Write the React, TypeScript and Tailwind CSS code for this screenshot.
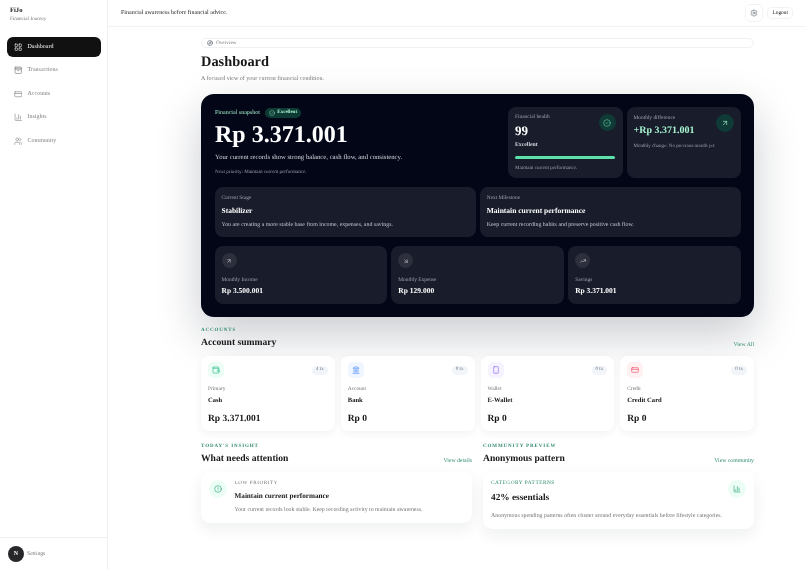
import React from "react";
import { LayoutGrid, CreditCard, ChartColumn, Users, Settings, Compass, CircleCheck, ArrowUpRight, ArrowDownRight, TrendingUp, Wallet, Landmark, Smartphone, CircleAlert } from "lucide-react";

function TxIcon({ className }: { className?: string }) {
  return (
    <svg viewBox="0 0 24 24" fill="none" stroke="currentColor" strokeWidth={1.8} strokeLinecap="round" strokeLinejoin="round" className={className}>
      <rect x="3" y="3" width="18" height="18" rx="2" />
      <path d="M3 9h18" />
      <path d="M3 6h18" />
      <path d="M10 13h4" />
    </svg>
  );
}

const nav = [
  { label: "Dashboard", Icon: LayoutGrid, active: true },
  { label: "Transactions", Icon: TxIcon },
  { label: "Accounts", Icon: CreditCard },
  { label: "Insights", Icon: ChartColumn },
  { label: "Community", Icon: Users },
];

const stats = [
  { label: "Monthly Income", value: "Rp 3.500.001", Icon: ArrowUpRight },
  { label: "Monthly Expense", value: "Rp 129.000", Icon: ArrowDownRight },
  { label: "Savings", value: "Rp 3.371.001", Icon: TrendingUp },
];

const accounts = [
  { kicker: "Primary", name: "Cash", value: "Rp 3.371.001", tx: "4 tx", Icon: Wallet, box: "bg-[#ecfdf5]", color: "text-[#10b981]" },
  { kicker: "Account", name: "Bank", value: "Rp 0", tx: "0 tx", Icon: Landmark, box: "bg-[#eff6ff]", color: "text-[#3b82f6]" },
  { kicker: "Wallet", name: "E-Wallet", value: "Rp 0", tx: "0 tx", Icon: Smartphone, box: "bg-[#f5f3ff]", color: "text-[#8b5cf6]" },
  { kicker: "Credit", name: "Credit Card", value: "Rp 0", tx: "0 tx", Icon: CreditCard, box: "bg-[#fff1f2]", color: "text-[#f43f5e]" },
];

function SectionHead({ kicker, title, link }: { kicker: string; title: string; link: string }) {
  return (
    <div className="flex items-end justify-between">
      <div>
        <div className="text-[5px] leading-[7px] font-bold tracking-[0.18em] text-[#2f8a72]">{kicker}</div>
        <div className="mt-[2px] text-[9.6px] leading-[14px] font-bold text-[#171717]">{title}</div>
      </div>
      <div className="pb-[1px] text-[5.75px] leading-[8px] text-[#2f8a72]">{link}</div>
    </div>
  );
}

export default function App() {
  return (
    <div className="flex h-[570px] w-[806px] overflow-hidden bg-white text-[#171717] [font-family:'Liberation_Serif',serif] [text-rendering:geometricPrecision]">
      <aside className="flex w-[108px] shrink-0 flex-col border-r border-[#eef0f3] [will-change:transform]">
        <div className="px-[10px] pt-[6.5px]">
          <div className="text-[6.6px] leading-[8px] font-bold">FiJo</div>
          <div className="text-[5.1px] leading-[8px] text-[#737373]">Financial Journey</div>
        </div>
        <nav className="mt-[14.5px] flex flex-col gap-[3.5px] px-[6.5px]">
          {nav.map(({ label, Icon, active }) => (
            <div key={label} className={`flex h-[20px] items-center gap-[5.5px] rounded-[6px] px-[7px] text-[6px] ${active ? "bg-[#111111] text-white" : "text-[#7a7a7a]"}`}>
              <Icon className="size-[8.5px]" strokeWidth={1.6} />
              <span>{label}</span>
            </div>
          ))}
        </nav>
        <div className="mt-auto flex h-[33px] items-center gap-[2px] border-t border-[#eef0f3] px-[8px]">
          <div className="flex size-[16px] items-center justify-center rounded-full bg-[#27272a] text-[6px] font-bold text-white">N</div>
          <span className="ml-[1px] text-[5.7px] text-[#7a7a7a]">Settings</span>
        </div>
      </aside>

      <main className="flex min-w-0 flex-1 flex-col [will-change:transform]">
        <header className="flex h-[27px] shrink-0 items-center justify-between border-b border-[#f1f2f4] pl-[13px] pr-[13px]">
          <span className="text-[6px]">Financial awareness before financial advice.</span>
          <div className="flex items-center gap-[4px]">
            <div className="flex size-[18px] items-center justify-center rounded-[5px] border border-[#f1f2f4]">
              <Settings className="size-[8px] text-[#4b5563]" strokeWidth={1.5} />
            </div>
            <div className="flex h-[12px] items-center rounded-[4px] border border-[#f1f2f4] px-[4px] text-[5.4px]">Logout</div>
          </div>
        </header>

        <div className="ml-[93px] w-[553px]">
          <div className="mt-[10.5px] flex h-[10px] items-center gap-[3px] rounded-full border border-[#eff0f2] px-[5px] text-[5.2px] leading-[8px] text-[#737373]">
            <Compass className="size-[6px] text-[#374151]" strokeWidth={2} />
            <span>Overview</span>
          </div>
          <h1 className="mt-[4px] text-[14.4px] leading-[20px] font-bold">Dashboard</h1>
          <p className="mt-[3px] text-[6px] leading-[8px] text-[#737373]">A focused view of your current financial condition.</p>

          <section className="mt-[11.5px] flex h-[223px] flex-col gap-[9px] rounded-[13px] bg-[#030617] py-[13px] pl-[13.5px] pr-[13px] shadow-[0_18px_45px_rgba(15,23,42,0.22)]">
            <div className="flex h-[71px] gap-[4px]">
              <div className="min-w-0 flex-1 pl-[0.5px] pt-[1px]">
                <div className="flex items-center gap-[5px]">
                  <span className="text-[6px] text-[#a7f3d0]">Financial snapshot</span>
                  <span className="flex h-[10px] items-center gap-[2.5px] rounded-full bg-[#0d3b33] px-[4px] text-[5px] font-bold text-[#a7f3d0]">
                    <CircleCheck className="size-[6px]" strokeWidth={1.6} />Excellent
                  </span>
                </div>
                <div className="mt-[1px] text-[24px] leading-[32px] font-bold text-white">Rp 3.371.001</div>
                <div className="mt-[2px] text-[6.7px] leading-[10px] text-[#d1d5db]">Your current records show strong balance, cash flow, and consistency.</div>
                <div className="mt-[5px] text-[5.1px] leading-[8px] text-[#9ca3af]">Next priority: Maintain current performance.</div>
              </div>
              <div className="relative w-[115px] rounded-[8px] bg-[#181c2b] px-[7.5px] pt-[6px]">
                <div className="text-[5.4px] leading-[8px] text-[#9ca3af]">Financial health</div>
                <div className="mt-[3px] text-[13px] leading-[14px] font-bold text-white">99</div>
                <div className="mt-[3px] text-[5.75px] leading-[9px] font-bold text-[#d1d5db]">Excellent</div>
                <div className="mt-[6px] h-[3px] rounded-full bg-[#5ee0ab]" />
                <div className="mt-[5px] text-[5.1px] leading-[8px] text-[#9ca3af]">Maintain current performance.</div>
                <div className="absolute right-[7px] top-[7px] flex size-[17px] items-center justify-center rounded-full bg-[#0f3a35] text-[#6ee7b7]">
                  <CircleCheck className="size-[8px]" strokeWidth={1.6} />
                </div>
              </div>
              <div className="relative w-[114.5px] rounded-[8px] bg-[#181c2b] px-[7px] pt-[7px]">
                <div className="text-[5.4px] leading-[8px] text-[#9ca3af]">Monthly difference</div>
                <div className="mt-[2px] text-[10px] leading-[14px] font-bold text-[#a7f3d0]">+Rp 3.371.001</div>
                <div className="mt-[5px] text-[5px] leading-[8px] text-[#9ca3af]">Monthly change: No previous month yet</div>
                <div className="absolute right-[7px] top-[7px] flex size-[18px] items-center justify-center rounded-full bg-[#0f3a35] text-[#a7f3d0]">
                  <ArrowUpRight className="size-[8px]" strokeWidth={2} />
                </div>
              </div>
            </div>

            <div className="flex h-[50px] gap-[4px]">
              <div className="flex-1 rounded-[8px] bg-[#181c2b] px-[7px] pt-[8px]">
                <div className="text-[5.4px] leading-[7px] text-[#9ca3af]">Current Stage</div>
                <div className="mt-[4px] text-[7.5px] leading-[10px] font-bold text-white">Stabilizer</div>
                <div className="mt-[5px] text-[5.9px] leading-[9px] text-[#c4c8d0]">You are creating a more stable base from income, expenses, and savings.</div>
              </div>
              <div className="flex-1 rounded-[8px] bg-[#181c2b] px-[7px] pt-[8px]">
                <div className="text-[5.4px] leading-[7px] text-[#9ca3af]">Next Milestone</div>
                <div className="mt-[4px] text-[7.5px] leading-[10px] font-bold text-white">Maintain current performance</div>
                <div className="mt-[5px] text-[5.9px] leading-[9px] text-[#c4c8d0]">Keep current recording habits and preserve positive cash flow.</div>
              </div>
            </div>

            <div className="grid h-[58px] grid-cols-3 gap-[4px]">
              {stats.map(({ label, value, Icon }) => (
                <div key={label} className="rounded-[8px] bg-[#181c2b] px-[7px] pt-[7px]">
                  <div className="flex size-[15px] items-center justify-center rounded-full bg-[#2d303c] text-[#e5e7eb]">
                    <Icon className="size-[6px]" strokeWidth={2} />
                  </div>
                  <div className="mt-[8px] text-[5.4px] leading-[8px] text-[#9ca3af]">{label}</div>
                  <div className="mt-[2px] text-[7.5px] leading-[10px] font-bold text-white">{value}</div>
                </div>
              ))}
            </div>
          </section>

          <div className="mt-[10px]">
            <SectionHead kicker="ACCOUNTS" title="Account summary" link="View All" />
          </div>
          <div className="mt-[6px] grid h-[75px] grid-cols-4 gap-[6px]">
            {accounts.map(({ kicker, name, value, tx, Icon, box, color }) => (
              <div key={name} className="rounded-[8px] bg-white px-[7px] pt-[6px] shadow-[0_2px_8px_rgba(15,23,42,0.06)]">
                <div className="flex items-center justify-between">
                  <div className={`flex size-[16px] items-center justify-center rounded-[5px] ${box} ${color}`}>
                    <Icon className="size-[8px]" strokeWidth={1.8} />
                  </div>
                  <span className="flex h-[9px] items-center rounded-full bg-[#f1f5f9] px-[4px] text-[5px] text-[#6b7280]">{tx}</span>
                </div>
                <div className="mt-[7px] text-[5.4px] leading-[8px] text-[#737373]">{kicker}</div>
                <div className="mt-[3.5px] text-[6.6px] leading-[8px] font-bold">{name}</div>
                <div className="mt-[8px] text-[9.5px] leading-[12px] font-bold">{value}</div>
              </div>
            ))}
          </div>

          <div className="mt-[11.5px] grid grid-cols-2 gap-[11px]">
            <div>
              <SectionHead kicker="TODAY'S INSIGHT" title="What needs attention" link="View details" />
              <div className="mt-[6px] flex h-[51px] gap-[7.5px] rounded-[9px] bg-white px-[8px] pt-[7px] shadow-[0_6px_16px_rgba(15,23,42,0.07)]">
                <div className="mt-[1px] flex size-[18px] shrink-0 items-center justify-center rounded-full bg-[#ecfdf5] text-[#059669]">
                  <CircleAlert className="size-[8px]" strokeWidth={1.6} />
                </div>
                <div>
                  <div className="text-[5.1px] leading-[8px] tracking-[0.12em] text-[#737373]">LOW PRIORITY</div>
                  <div className="mt-[4px] text-[7.2px] leading-[10px] font-bold">Maintain current performance</div>
                  <div className="mt-[5px] text-[5.85px] leading-[9px] text-[#737373]">Your current records look stable. Keep recording activity to maintain awareness.</div>
                </div>
              </div>
            </div>
            <div>
              <SectionHead kicker="COMMUNITY PREVIEW" title="Anonymous pattern" link="View community" />
              <div className="relative mt-[6px] h-[57px] rounded-[9px] bg-white px-[8px] pt-[7px] shadow-[0_6px_16px_rgba(15,23,42,0.07)]">
                <div className="text-[5.3px] leading-[8px] tracking-[0.1em] text-[#2f8a72]">CATEGORY PATTERNS</div>
                <div className="mt-[5.5px] text-[9.3px] leading-[13px] font-bold">42% essentials</div>
                <div className="mt-[6.5px] text-[5.9px] leading-[9px] text-[#737373]">Anonymous spending patterns often cluster around everyday essentials before lifestyle categories.</div>
                <div className="absolute right-[8px] top-[8px] flex size-[18px] items-center justify-center rounded-full bg-[#ecfdf5] text-[#059669]">
                  <ChartColumn className="size-[8px]" strokeWidth={1.6} />
                </div>
              </div>
            </div>
          </div>
        </div>
      </main>
    </div>
  );
}
